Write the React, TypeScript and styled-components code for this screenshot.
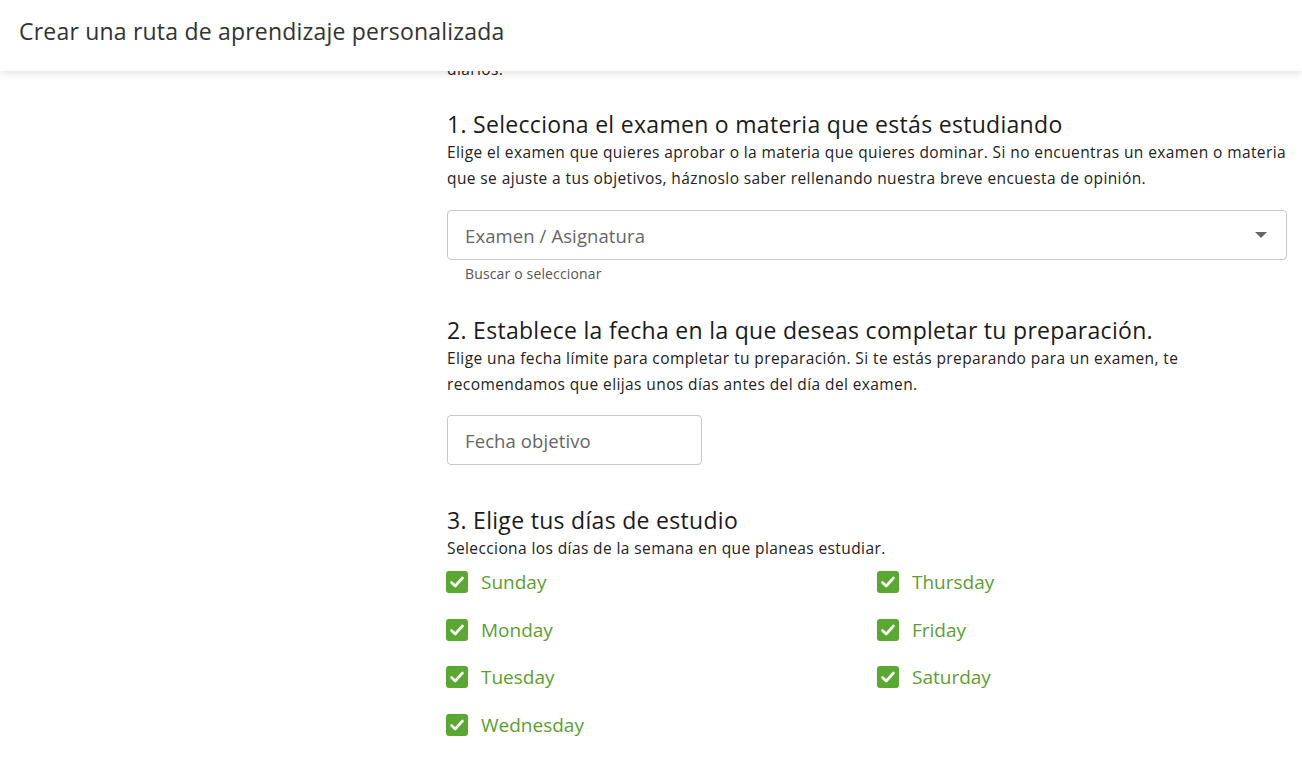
import React from "react";
import styled, { createGlobalStyle } from "styled-components";

const Global = createGlobalStyle`
  html, body { margin: 0; padding: 0; background: #fff; }
  body { font-family: "Open Sans", "Lato", sans-serif; overflow: hidden; }
  * { box-sizing: border-box; }
`;

const Page = styled.div`
  display: flex;
  flex-direction: column;
  height: 767px;
  width: 1302px;
  overflow: hidden;
`;

const Header = styled.header`
  position: relative;
  z-index: 2;
  flex: 0 0 71px;
  display: flex;
  align-items: center;
  padding: 0 0 10px 19px;
  background: #fff;
  box-shadow: 0 2px 8px rgba(0, 0, 0, 0.12);
`;

const Title = styled.h1`
  margin: 0;
  font-size: 23px;
  letter-spacing: 0.2px;
  font-weight: 400;
  color: #333;
`;

const Body = styled.main`
  flex: 1;
  display: grid;
  grid-template-columns: 447px 840px;
  overflow: hidden;
`;

const Column = styled.div`
  grid-column: 2;
  display: flex;
  flex-direction: column;
`;

const Text = styled.p<{ $mt?: number }>`
  margin: ${(p) => p.$mt ?? 0}px 0 0;
  font-size: 15.5px;
  letter-spacing: 0.4px;
  line-height: 26px;
  color: #222;
  white-space: nowrap;
`;

const Heading = styled.h2<{ $mt: number }>`
  margin: ${(p) => p.$mt}px 0 1px;
  font-size: 23px;
  letter-spacing: 0.3px;
  line-height: 28px;
  font-weight: 400;
  color: #1b1b1b;
`;

const Field = styled.div<{ $width?: number; $mt: number }>`
  margin-top: ${(p) => p.$mt}px;
  width: ${(p) => (p.$width ? `${p.$width}px` : "100%")};
  height: 50px;
  border: 1px solid #c8c8c8;
  border-radius: 4px;
  display: flex;
  align-items: center;
  justify-content: space-between;
  padding: 0 19px 0 17px;
  font-size: 18.5px;
  letter-spacing: 0.1px;
  color: #666;
`;

const Caret = styled.span`
  width: 0;
  height: 0;
  border-left: 6px solid transparent;
  border-right: 6px solid transparent;
  border-top: 6px solid #666;
`;

const Helper = styled.div`
  margin-top: 5px;
  padding-left: 18px;
  font-size: 14px;
  letter-spacing: 0.15px;
  line-height: 18px;
  color: #555;
`;

const Days = styled.div`
  margin: -3px 0 0 -1px;
  display: grid;
  grid-template-columns: 431px 1fr;
  grid-template-rows: repeat(4, 47.7px);
  grid-auto-flow: column;
`;

const Day = styled.label`
  display: flex;
  align-items: center;
  gap: 13px;
  font-size: 19px;
  color: #5a9f2f;
`;

const Box = styled.span`
  width: 22px;
  height: 22px;
  border-radius: 3px;
  background: #5aa832;
  display: flex;
  align-items: center;
  justify-content: center;
`;

const Check = () => (
  <svg width="16" height="16" viewBox="0 0 16 16" fill="none">
    <path d="M2.5 8.5 L6.2 12 L13.5 4" stroke="#fff" strokeWidth="2.6" strokeLinecap="round" strokeLinejoin="round" />
  </svg>
);

const days = ["Sunday", "Monday", "Tuesday", "Wednesday", "Thursday", "Friday", "Saturday"];

export default function App() {
  return (
    <Page>
      <Global />
      <Header>
        <Title>Crear una ruta de aprendizaje personalizada</Title>
      </Header>
      <Body>
        <Column>
          <Text $mt={-15}>diarios.</Text>
          <Heading $mt={28}>1. Selecciona el examen o materia que estás estudiando</Heading>
          <Text>
            Elige el examen que quieres aprobar o la materia que quieres dominar. Si no encuentras un examen o materia
            <br />
            que se ajuste a tus objetivos, háznoslo saber rellenando nuestra breve encuesta de opinión.
          </Text>
          <Field $mt={19}>
            <span>Examen / Asignatura</span>
            <Caret />
          </Field>
          <Helper>Buscar o seleccionar</Helper>
          <Heading $mt={33}>2. Establece la fecha en la que deseas completar tu preparación.</Heading>
          <Text>
            Elige una fecha límite para completar tu preparación. Si te estás preparando para un examen, te
            <br />
            recomendamos que elijas unos días antes del día del examen.
          </Text>
          <Field $mt={18} $width={255}>
            <span>Fecha objetivo</span>
          </Field>
          <Heading $mt={41}>3. Elige tus días de estudio</Heading>
          <Text>Selecciona los días de la semana en que planeas estudiar.</Text>
          <Days>
            {days.map((d) => (
              <Day key={d}>
                <Box>
                  <Check />
                </Box>
                {d}
              </Day>
            ))}
          </Days>
        </Column>
      </Body>
    </Page>
  );
}
